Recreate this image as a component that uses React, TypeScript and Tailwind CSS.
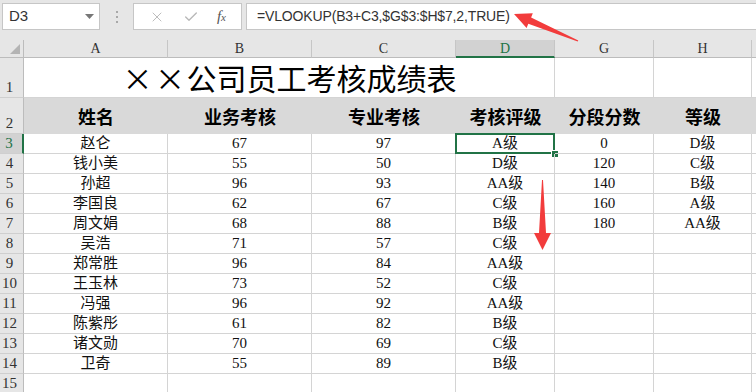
import React from 'react';
import { X, Check } from 'lucide-react';

const serif = 'font-["Liberation_Serif","Noto_Sans_CJK_SC",serif]';
const cjk = 'font-["Noto_Sans_CJK_SC",sans-serif]';

const rows = [
  ['赵仑', '67', '97', 'A级', '0', 'D级'],
  ['钱小美', '55', '50', 'D级', '120', 'C级'],
  ['孙超', '96', '93', 'AA级', '140', 'B级'],
  ['李国良', '62', '67', 'C级', '160', 'A级'],
  ['周文娟', '68', '88', 'B级', '180', 'AA级'],
  ['吴浩', '71', '57', 'C级', '', ''],
  ['郑常胜', '96', '84', 'AA级', '', ''],
  ['王玉林', '73', '52', 'C级', '', ''],
  ['冯强', '96', '92', 'AA级', '', ''],
  ['陈紫彤', '61', '82', 'B级', '', ''],
  ['诸文勋', '70', '69', 'C级', '', ''],
  ['卫奇', '55', '89', 'B级', '', ''],
  ['', '', '', '', '', ''],
];

const widths = ['w-[144px]', 'w-[144px]', 'w-[144px]', 'w-[99px]', 'w-[99px]', 'w-[98px]'];

const RowHead: React.FC<{ n: number; selected?: boolean }> = ({ n, selected }) => (
  <div
    className={`w-[24px] shrink-0 flex items-end justify-center pr-[4px] pb-[1px] text-[15px] leading-[18px] ${serif} border-b border-[#cfcfcf] ${
      selected
        ? 'bg-[#d2d2d2] text-[#217346] border-r-2 border-r-[#217346]'
        : 'bg-[#e6e6e6] text-[#333] border-r border-r-[#bcbcbc]'
    }`}
  >
    {n}
  </div>
);

export default function App() {
  return (
    <div className="relative w-[756px] h-[392px] overflow-hidden bg-white select-none">
      {/* Formula bar */}
      <div className="h-[40px] bg-[#e6e6e6] flex items-start pt-[3px]">
        <div className="ml-[2px] w-[98px] h-[27px] bg-white border border-[#c6c6c6] flex items-center justify-between pl-[6px] pr-[5px]">
          <span className='text-[15px] text-[#333] font-["Liberation_Sans",sans-serif]'>D3</span>
          <svg width="9" height="5" viewBox="0 0 9 5">
            <path d="M0 0h9L4.5 5z" fill="#777" />
          </svg>
        </div>
        <div className="w-[33px] h-[27px] flex flex-col items-center justify-center gap-[3px]">
          <div className="w-[2px] h-[2px] bg-[#a8a8a8]" />
          <div className="w-[2px] h-[2px] bg-[#a8a8a8]" />
          <div className="w-[2px] h-[2px] bg-[#a8a8a8]" />
        </div>
        <div className="w-[109px] h-[27px] bg-white border border-[#c6c6c6] flex items-center justify-around px-[6px]">
          <X size={16} strokeWidth={1.4} color="#b8b8b8" />
          <Check size={16} strokeWidth={2} color="#b8b8b8" />
          <span className={`italic text-[15px] text-[#555] ${serif}`}>
            f<span className="text-[11px]">x</span>
          </span>
        </div>
        <div className="ml-[4px] flex-1 h-[27px] bg-white border border-[#c6c6c6] border-r-0 flex items-center pl-[10px]">
          <span className='text-[14px] text-[#333] font-["Liberation_Sans",sans-serif] tracking-[-0.15px]'>
            =VLOOKUP(B3+C3,$G$3:$H$7,2,TRUE)
          </span>
        </div>
      </div>

      {/* Column headers */}
      <div className="h-[18px] flex">
        <div className="w-[24px] shrink-0 bg-[#e6e6e6] border-r border-b border-[#bcbcbc] flex items-end justify-end p-[3px]">
          <svg width="10" height="10" viewBox="0 0 10 10">
            <path d="M10 0v10H0z" fill="#b4b4b4" />
          </svg>
        </div>
        {['A', 'B', 'C', 'D', 'G', 'H'].map((c, i) => (
          <div
            key={c}
            className={`${widths[i]} shrink-0 flex items-center justify-center text-[14px] ${serif} border-r border-[#c6c6c6] ${
              c === 'D'
                ? 'bg-[#d2d2d2] text-[#217346] border-b-2 border-b-[#217346]'
                : 'bg-[#e6e6e6] text-[#333] border-b border-b-[#bcbcbc]'
            }`}
          >
            {c}
          </div>
        ))}
        <div className="flex-1 bg-[#e6e6e6] border-b border-[#bcbcbc]" />
      </div>

      {/* Row 1: title */}
      <div className="h-[40px] flex">
        <RowHead n={1} />
        <div className={`w-[531px] shrink-0 border-r border-b border-[#d4d4d4] flex items-end justify-center pb-[2px] text-[30px] leading-[36px] text-black ${cjk}`}>
          <span className="inline-block w-[32px] text-center">×</span>
          <span className="inline-block w-[33px] text-center">×</span>
          <span>公司员工考核成绩表</span>
        </div>
        <div className="w-[99px] shrink-0 border-r border-b border-[#d4d4d4]" />
        <div className="w-[98px] shrink-0 border-r border-b border-[#d4d4d4]" />
        <div className="flex-1 border-b border-[#d4d4d4]" />
      </div>

      {/* Row 2: headers */}
      <div className="h-[36px] flex">
        <RowHead n={2} />
        <div className={`flex-1 flex bg-[#d9d9d9] text-[18px] font-bold text-black ${cjk}`}>
          {['姓名', '业务考核', '专业考核', '考核评级', '分段分数', '等级'].map((h, i) => (
            <div key={h} className={`${widths[i]} shrink-0 flex items-center justify-center`}>
              {h}
            </div>
          ))}
        </div>
      </div>

      {/* Data rows */}
      {rows.map((r, ri) => (
        <div key={ri} className="h-[20px] flex">
          <RowHead n={ri + 3} selected={ri === 0} />
          {r.map((v, ci) => (
            <div
              key={ci}
              className={`${widths[ci]} shrink-0 relative flex items-center justify-center border-r border-b border-[#d4d4d4] text-[15px] text-[#111] ${serif}`}
            >
              {v}
              {ri === 0 && ci === 3 && (
                <>
                  <div className="absolute -left-px -top-px right-[-1px] bottom-[-1px] border-2 border-[#217346]" />
                  <div className="absolute right-[-5px] bottom-[-5px] w-[8px] h-[8px] bg-[#217346] border border-white" />
                </>
              )}
            </div>
          ))}
          <div className="flex-1 border-b border-[#d4d4d4]" />
        </div>
      ))}

      {/* Red annotation arrows */}
      <svg className="absolute inset-0 pointer-events-none" width="756" height="392">
        <polygon
          points="514,14 532.8,13.2 531.1,17.4 578.3,40.4 577.7,41.6 528.3,23.8 526.6,28"
          fill="#f23c3c"
        />
        <polygon points="542.5,250 534,233 539,233 542,180 543,180 546,233 551,233" fill="#f23c3c" />
      </svg>
    </div>
  );
}
